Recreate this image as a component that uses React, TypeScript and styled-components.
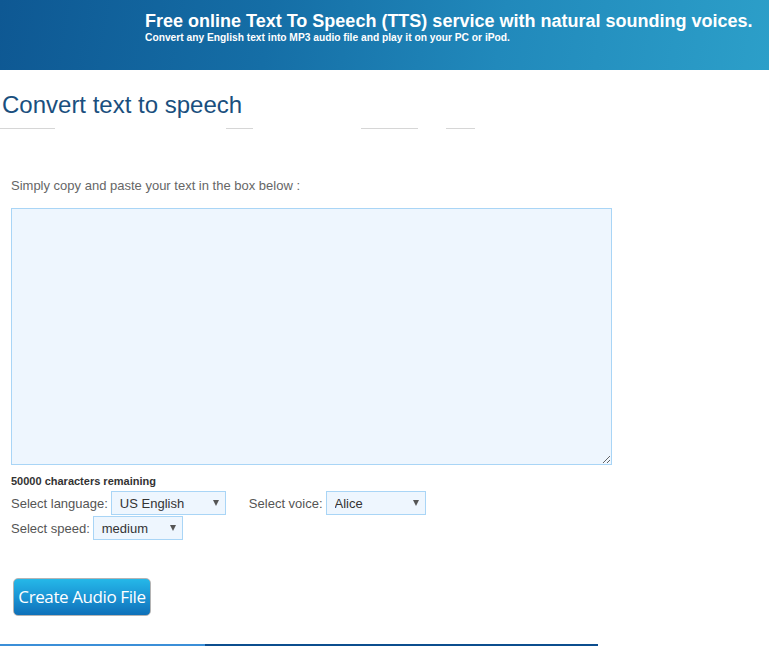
import React from "react";
import styled, { createGlobalStyle } from "styled-components";

const GlobalStyle = createGlobalStyle`
  html, body {
    margin: 0;
    padding: 0;
    background: #ffffff;
    font-family: "Liberation Sans", Arial, sans-serif;
  }
`;

const App = () => {
  return (
    <Page>
      <GlobalStyle />
      <Banner>
        <BannerTitle>
          Free online Text To Speech (TTS) service with natural sounding voices.
        </BannerTitle>
        <BannerSub>
          Convert any English text into MP3 audio file and play it on your PC or iPod.
        </BannerSub>
      </Banner>

      <Heading>Convert text to speech</Heading>
      <Rule>
        <Seg $w={55} />
        <Gap $w={171} />
        <Seg $w={27} />
        <Gap $w={108} />
        <Seg $w={57} />
        <Gap $w={28} />
        <Seg $w={29} />
      </Rule>

      <Content>
        <Intro>Simply copy and paste your text in the box below :</Intro>
        <TextBox />
        <Remaining>50000 characters remaining</Remaining>
        <OptionRow $mt={3}>
          <Label>Select language:</Label>
          <SelectWrap $w={115}>
            <Select defaultValue="US English">
              <option>US English</option>
              <option>UK English</option>
            </Select>
          </SelectWrap>
          <Label $ml={23}>Select voice:</Label>
          <SelectWrap $w={100}>
            <Select defaultValue="Alice">
              <option>Alice</option>
              <option>Daisy</option>
            </Select>
          </SelectWrap>
        </OptionRow>
        <OptionRow $mt={1}>
          <Label>Select speed:</Label>
          <SelectWrap $w={90}>
            <Select defaultValue="medium">
              <option>slow</option>
              <option>medium</option>
              <option>fast</option>
            </Select>
          </SelectWrap>
        </OptionRow>
        <CreateButton>Create Audio File</CreateButton>
      </Content>

      <Footer>
        <FootSeg $w={205} $c="#3b8fd8" />
        <FootSeg $w={393} $c="#0b4d8e" />
      </Footer>
    </Page>
  );
};

export default App;

const Page = styled.div`
  width: 769px;
  height: 646px;
  display: flex;
  flex-direction: column;
  overflow: hidden;
`;

const Banner = styled.div`
  height: 70px;
  box-sizing: border-box;
  padding: 11px 0 0 145px;
  background: linear-gradient(100deg, #0e5893 0%, #156ea6 35%, #2189bb 65%, #2c9fc9 100%);
  color: #ffffff;
`;

const BannerTitle = styled.div`
  font-size: 18px;
  font-weight: 700;
  line-height: 20px;
  white-space: nowrap;
`;

const BannerSub = styled.div`
  font-size: 11px;
  font-weight: 700;
  line-height: 13px;
  white-space: nowrap;
  transform: scaleX(0.93);
  transform-origin: left center;
`;

const Heading = styled.h1`
  margin: 20px 0 0 2px;
  font-size: 24px;
  font-weight: 400;
  line-height: 30px;
  color: #1a4f7e;
`;

const Rule = styled.div`
  display: flex;
  margin-top: 8px;
  height: 1px;
`;

const Seg = styled.div<{ $w: number }>`
  width: ${(p) => p.$w}px;
  height: 1px;
  background: #d6d6d6;
`;

const Gap = styled.div<{ $w: number }>`
  width: ${(p) => p.$w}px;
`;

const Content = styled.div`
  display: flex;
  flex-direction: column;
  padding: 0 0 0 11px;
  flex: 1;
`;

const Intro = styled.div`
  margin-top: 49px;
  font-size: 13px;
  line-height: 15px;
  color: #666666;
`;

const TextBox = styled.textarea`
  margin-top: 15px;
  width: 601px;
  height: 257px;
  box-sizing: border-box;
  background: #eef6fe;
  border: 1px solid #a9d5f6;
  border-radius: 0;
  outline: none;
  padding: 4px;
  font-family: "Liberation Sans", Arial, sans-serif;
  display: block;
`;

const Remaining = styled.div`
  margin-top: 10px;
  font-size: 11px;
  font-weight: 700;
  line-height: 13px;
  color: #333333;
`;

const OptionRow = styled.div<{ $mt: number }>`
  display: flex;
  align-items: center;
  height: 24px;
  margin-top: ${(p) => p.$mt}px;
`;

const Label = styled.span<{ $ml?: number }>`
  margin-left: ${(p) => p.$ml ?? 0}px;
  margin-right: 3px;
  font-size: 13px;
  color: #555555;
`;

const SelectWrap = styled.div<{ $w: number }>`
  position: relative;
  width: ${(p) => p.$w}px;
  height: 24px;
  &::after {
    content: "";
    position: absolute;
    right: 7px;
    top: 9px;
    border-left: 3.5px solid transparent;
    border-right: 3.5px solid transparent;
    border-top: 6px solid #555555;
    pointer-events: none;
  }
`;

const Select = styled.select`
  appearance: none;
  width: 100%;
  height: 24px;
  box-sizing: border-box;
  border: 1px solid #a9d5f6;
  border-radius: 0;
  background: #eef6fe;
  padding: 0 0 0 8px;
  font-family: "Liberation Sans", Arial, sans-serif;
  font-size: 13px;
  color: #333333;
  outline: none;
`;

const CreateButton = styled.button`
  margin-top: 38px;
  margin-left: 2px;
  width: 138px;
  height: 38px;
  box-sizing: border-box;
  border: 1px solid #b4b4b4;
  border-radius: 5px;
  background: linear-gradient(180deg, #25b8e8 0%, #1b94d4 50%, #0e70b9 100%);
  color: #ffffff;
  font-family: "Open Sans", Lato, sans-serif;
  font-size: 17px;
  letter-spacing: -0.4px;
  padding: 0 0 2px;
  cursor: pointer;
`;

const Footer = styled.div`
  display: flex;
  height: 2px;
`;

const FootSeg = styled.div<{ $w: number; $c: string }>`
  width: ${(p) => p.$w}px;
  height: 2px;
  background: ${(p) => p.$c};
`;
